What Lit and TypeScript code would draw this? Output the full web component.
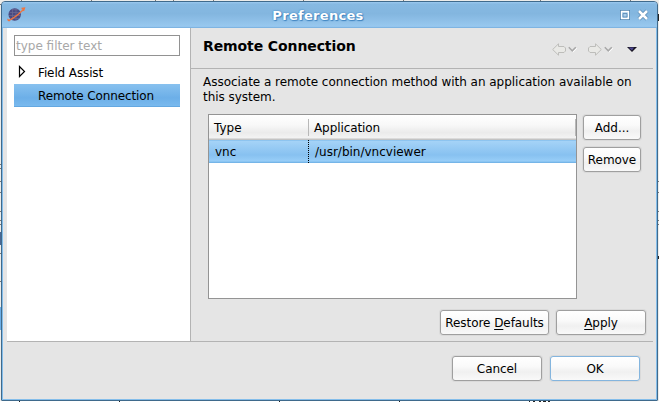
import { LitElement, html, svg, css } from "lit";
import { customElement, property } from "lit/decorators.js";

@customElement("push-button")
class PushButton extends LitElement {
  @property() label = "";
  @property() mnemonic = "";
  static styles = css`
    :host { display: flex; box-sizing: border-box; height: 25px; border: 1px solid #9f9f9f; border-radius: 3px;
      background: linear-gradient(#fff 0, #fafafa 40%, #f0f0f0 65%, #f9f9f9 100%); box-shadow: 0 0 0 1px #dadada;
      align-items: center; justify-content: center; padding-top: 1px; line-height: 22px; white-space: nowrap; letter-spacing: -.06px; }
    :host([primary]) { border-color: #84b5de; }
    .key { text-decoration: underline; text-underline-offset: 2px; text-decoration-thickness: 1px; }
  `;
  render() {
    const i = this.mnemonic ? this.label.indexOf(this.mnemonic) : -1;
    return i < 0
      ? html`<span>${this.label}</span>`
      : html`<span>${this.label.slice(0, i)}<span class="key">${this.mnemonic}</span>${this.label.slice(i + 1)}</span>`;
  }
}

const arrow = svg`<path d="M.7 6.500 6.500 .8V3.500H12L13.500 5V8L12 9.500H6.500V12.200Z" fill="#e9e9e6" stroke="#bdbdba"/>`;
const chevron = html`<svg class="chev" width="9" height="7"><path d="M1.500 2 5 5.500 8.500 2" fill="none" stroke="#fff" stroke-width="1.500"/><path d="M.8 1.300 4.300 4.800 7.800 1.300" fill="none" stroke="#a8a8a8" stroke-width="1.600"/></svg>`;

@customElement("app-root")
class AppRoot extends LitElement {
  static styles = css`
    * { box-sizing: border-box; }
    :host { display: block; position: relative; width: 659px; height: 402px; overflow: hidden; background: #ececea;
      font: 12px/15px "DejaVu Sans", sans-serif; color: #000; }
    .behind { position: absolute; inset: 0; display: block; }
    .window { position: relative; margin: 1px 0 0 1px; width: 657px; height: 400px; border: 1px solid #3f6a8c; border-radius: 4px 4px 1px 1px;
      background: #e5e5e5; box-shadow: inset 0 0 0 1px #84bdea; display: flex; flex-direction: column; overflow: hidden; }
    .titlebar { height: 26px; flex: none; display: flex; align-items: center; padding: 0 8px 0 5px;
      background: linear-gradient(#9ccaf0 0, #86b9e2 2px, #83b6df 45%, #98c8ef 94%, #7eb4e2 96%); }
    .planet { width: 20px; height: 20px; }
    .caption { flex: 1; text-align: center; color: #fff; font-weight: bold; font-size: 13px; letter-spacing: .3px; padding-right: 10px;
      text-shadow: 0 0 1px #3f84c0, 1px 1px 1px #3f84c0, 0 0 2px #4d90c8; }
    .controls { display: flex; gap: 6px; align-items: center; }
    .controls svg { display: block; }
    .main { display: flex; height: 314px; margin: 0 4px 0 5px; border-bottom: 1px solid #b3b3b3; flex: none; }
    .nav { width: 184px; background: #fff; border-right: 1px solid #b3b3b3; padding: 7px 9px 0 7px; }
    .filter { width: 166px; height: 21px; border: 1px solid #929292; color: #a8a8a8; padding: 2px 0 0 1px; line-height: 16px; }
    .tree { margin-top: 5px; width: 166px; }
    .node { height: 23px; padding-left: 24px; line-height: 25px; position: relative; letter-spacing: -.12px; }
    .node.on { background: linear-gradient(#88c1ef, #6cafe8 60%, #78b9ee 94%, #64a8e1 96%); }
    .twisty { position: absolute; left: 4px; top: 4px; }
    .page { flex: 1; display: flex; flex-direction: column; min-width: 0; }
    .head { height: 41px; border-bottom: 1px solid #b3b3b3; padding: 0 14px 0 12px; display: flex; align-items: center; flex: none; }
    h1 { margin: 0 auto 4px 0; font-size: 14px; line-height: 18px; letter-spacing: -.1px; }
    .tools { display: flex; align-items: center; padding-top: 2px; }
    .tools svg { display: block; }
    .chev { margin: 0 11px 0 2px; }
    .drop { margin-left: 3px; margin-right: 1px; }
    .text { margin: 6px 0 0 12px; height: 39px; white-space: nowrap; flex: none; letter-spacing: -.028px; }
    .body { display: flex; gap: 6px; margin-left: 17px; }
    .table { width: 369px; height: 185px; border: 1px solid #949494; background: #fff; }
    .row { display: flex; height: 23px; line-height: 24px; }
    .row.h { height: 25px; background: linear-gradient(#fff, #f8f8f8 40%, #ebebeb 70%, #f3f3f3 92%, #c3c3c3 96%); }
    .row.sel { background: linear-gradient(#75b5e8 0, #a5d3f7 1px, #87c1f0 65%, #98cef8 92%, #75b5e8 96%); }
    .c1 { width: 100px; border-right: 1px dotted #000; padding-left: 6px; }
    .h .c1 { height: 17px; margin-top: 4px; line-height: 19px; border-right: 1px solid #b8b8b8; padding-left: 5px; }
    .h .c2 { height: 17px; margin: 4px 0; line-height: 19px; border-right: 1px solid #b8b8b8; padding-left: 5px; letter-spacing: -.09px; }
    .c2 { flex: 1; padding-left: 6px; }
    .side { display: flex; flex-direction: column; gap: 7px; width: 58px; padding-top: 1px; }
    .acts { display: flex; gap: 7px; justify-content: flex-end; padding: 11px 7px 0 0; }
    .footer { display: flex; gap: 8px; justify-content: flex-end; padding: 14px 17px 0 0; }
    .w90 { width: 90px; } .w109 { width: 109px; }
  `;
  render() {
    return html`
      <svg class="behind" width="659" height="402">
        <path d="M21.500 0V1M91.500 0V1M155.500 0V1M173.500 0V1M213.500 0V1M303.500 0V1M403.500 0V1M540.500 0V1M630.500 0V1" stroke="#777"/>
        <path d="M0 4.500H1M0 164.500H1M0 168.500H1M0 181.500H1M0 192.500H1M0 211.500H1M0 220.500H1M0 224.500H1M0 253.500H1M0 281.500H1M658 181.500H659M658 192.500H659M658 211.500H659M658 220.500H659M658 224.500H659" stroke="#777"/>
        <path d="M0 232h1v13h-1z" fill="#496794"/><path d="M0 307h1v23h-1z" fill="#6cafe8"/>
        <path d="M658 14h1v7h-1zM658 256h1v3h-1z" fill="#222"/>
        <path d="M0 401.500H659" stroke="#fff"/>
        <path d="M19 401.500h1m99 0h1m159 0h1m119 0h1m129 0h1m3 0h2m4 0h2m2 0h3m2 0h2" stroke="#222" fill="none"/>
      </svg>
      <div class="window">
        <div class="titlebar">
          <svg class="planet" viewBox="0 0 20 20">
            <circle cx="7.700" cy="9.500" r="6.200" fill="#494a82"/>
            <path d="M2.500 7.500H13M2 10.500H13.500M4 13.500H12M5 4.700H11M5.500 4V15M9 3.500V15" stroke="#6d6c94" stroke-width=".7"/>
            <path d="M1.300 15.500C6 14 12 9 17 4M1.300 14C.5 15 1.500 16 3 15.500M14.500 3.500 17.500 3 16.500 6" fill="none" stroke="#ee7440" stroke-width="1.300"/>
          </svg>
          <div class="caption">Preferences</div>
          <div class="controls">
            <svg width="12" height="12"><path d="M1 1H11V11H1Z" fill="#4d80ac"/><path d="M2.500 2.500H9.500V9.500H2.500Z" fill="#a8cdea" stroke="#fff" stroke-width="1.400"/><path d="M4 4.500H8V8H4Z" fill="#a8cdea" stroke="#5587b2" stroke-width=".8"/></svg>
            <svg width="12" height="12"><path d="M2 2 10 10M10 2 2 10" stroke="#5b8cb5" stroke-width="4"/><path d="M2 2 10 10M10 2 2 10" stroke="#fff" stroke-width="2.500"/></svg>
          </div>
        </div>
        <div class="main">
          <div class="nav">
            <div class="filter">type filter text</div>
            <div class="tree">
              <div class="node"><svg class="twisty" width="9" height="13"><path d="M1.500 1.500V11.500L6.500 6.500Z" fill="#fff" stroke="#000" stroke-width="1.200"/></svg>Field Assist</div>
              <div class="node on">Remote Connection</div>
            </div>
          </div>
          <div class="page">
            <div class="head">
              <h1>Remote Connection</h1>
              <div class="tools">
                <svg width="14" height="13">${arrow}</svg>${chevron}
                <svg width="14" height="13"><g transform="matrix(-1 0 0 1 14 0)">${arrow}</g></svg>${chevron}
                <svg class="drop" width="11" height="7"><path d="M0 1H10L5 6Z" fill="#16131f"/><path d="M1.500 1.500H7L5 4.500Z" fill="#4b4590"/></svg>
              </div>
            </div>
            <div class="text">Associate a remote connection method with an application available on<br>this system.</div>
            <div class="body">
              <div class="table">
                <div class="row h"><div class="c1">Type</div><div class="c2">Application</div></div>
                <div class="row sel"><div class="c1">vnc</div><div class="c2">/usr/bin/vncviewer</div></div>
              </div>
              <div class="side"><push-button label="Add..."></push-button><push-button label="Remove"></push-button></div>
            </div>
            <div class="acts">
              <push-button class="w109" label="Restore Defaults" mnemonic="D"></push-button>
              <push-button class="w90" label="Apply" mnemonic="A"></push-button>
            </div>
          </div>
        </div>
        <div class="footer">
          <push-button class="w90" label="Cancel"></push-button>
          <push-button class="w90" label="OK" primary></push-button>
        </div>
      </div>`;
  }
}
